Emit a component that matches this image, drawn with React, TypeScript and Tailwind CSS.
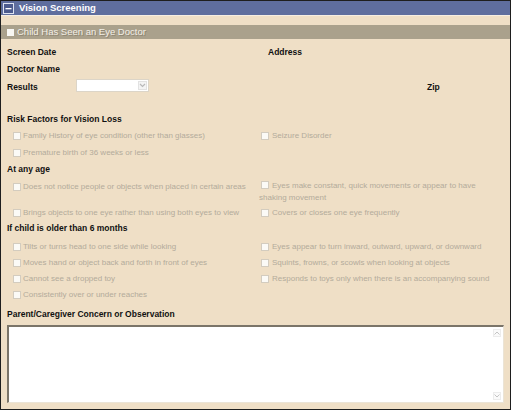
import React from "react";

const Cb = ({ label, right }: { label: string; right?: boolean }) => (
  <div className="flex items-center h-full pt-[2px]">
    <span className={`w-[8px] h-[8px] bg-[#fbfaf6] border border-[#d3ccbf] shrink-0 ml-[2px] ${right ? "mr-[3px]" : "mr-[2px]"}`} />
    <span className="text-[8px] text-[#b3ab9b] whitespace-nowrap">{label}</span>
  </div>
);

const Row = ({ h, mt, left, right }: { h: string; mt: string; left?: string; right?: string }) => (
  <div className={`grid grid-cols-[248px_1fr] pl-[10px] shrink-0 ${h} ${mt}`}>
    <div>{left ? <Cb label={left} /> : null}</div>
    <div>{right ? <Cb label={right} right /> : null}</div>
  </div>
);

const Label = ({ children }: { children: React.ReactNode }) => (
  <span className="block text-[8.5px] leading-[12px] font-bold text-[#111]">{children}</span>
);

export default function App() {
  return (
    <div className="w-[511px] h-[410px] border border-[#1e1e1e] bg-[#efdfc6] font-['Liberation_Sans',Arial,sans-serif] text-[8px] leading-[12px] flex flex-col overflow-hidden">
      {/* Header */}
      <div className="h-[15px] bg-[#5f6e9e] border-b border-[#f6eee2] flex items-center pl-[2px] shrink-0">
        <svg width="11" height="11" viewBox="0 0 11 11" className="shrink-0">
          <rect x="0.5" y="0.5" width="10" height="10" fill="#4c5b8d" stroke="#dfe4f1" />
          <rect x="2.5" y="5" width="6" height="1.3" fill="#ffffff" />
        </svg>
        <span className="ml-[5px] text-[9.5px] font-bold text-white leading-none">Vision Screening</span>
      </div>

      {/* Gray bar */}
      <div className="mt-[9px] h-[14px] bg-[#aaa18c] flex items-center pl-[6px] shrink-0">
        <span className="w-[7px] h-[7px] bg-[#f8f7f3] shrink-0" />
        <span className="ml-[3px] text-[9.5px] text-[#f3efe7] [text-shadow:1px_1px_0_#8d8471] leading-none">
          Child Has Seen an Eye Doctor
        </span>
      </div>

      {/* Info rows */}
      <div className="mt-[5px] h-[16px] grid grid-cols-[261px_1fr] items-center pl-[6px] shrink-0">
        <Label>Screen Date</Label>
        <Label>Address</Label>
      </div>
      <div className="mt-[1px] h-[16px] flex items-center pl-[6px] shrink-0">
        <Label>Doctor Name</Label>
      </div>
      <div className="mt-[1px] h-[16px] flex items-center pl-[6px] shrink-0">
        <div className="w-[69px] pt-[1px]">
          <Label>Results</Label>
        </div>
        <div className="w-[73px] h-[13px] bg-white border border-[#dcd5c8] flex items-center justify-end pr-[1px] -mt-[2px]">
          <span className="w-[9px] h-[9px] bg-[#f4f4f4] border border-[#e2e2e2] flex items-center justify-center">
            <svg width="7" height="5" viewBox="0 0 7 5">
              <path d="M1 1 L3.5 3.5 L6 1" fill="none" stroke="#b9b9b9" strokeWidth="1.2" />
            </svg>
          </span>
        </div>
        <div className="ml-[278px] pt-[2px]">
          <Label>Zip</Label>
        </div>
      </div>

      {/* Risk factors */}
      <div className="mt-[17px] h-[16px] flex items-center pl-[6px] shrink-0">
        <Label>Risk Factors for Vision Loss</Label>
      </div>
      <Row h="h-[16px]" mt="mt-0" left="Family History of eye condition (other than glasses)" right="Seizure Disorder" />
      <Row h="h-[16px]" mt="mt-[1px]" left="Premature birth of 36 weeks or less" />

      <div className="mt-[1px] h-[16px] flex items-center pl-[6px] shrink-0">
        <Label>At any age</Label>
      </div>
      <div className="mt-[1px] grid grid-cols-[248px_1fr] pl-[10px] h-[26px] shrink-0">
        <div className="h-[16px]">
          <Cb label="Does not notice people or objects when placed in certain areas" />
        </div>
        <div className="text-[8px] text-[#b3ab9b] leading-[12px] pt-[2px]">
          <span className="inline-block align-middle w-[8px] h-[8px] bg-[#fbfaf6] border border-[#d3ccbf] ml-[2px] mr-[3px] -mt-[1px]" />
          Eyes make constant, quick movements or appear to have
          <br />
          shaking movement
        </div>
      </div>
      <Row h="h-[16px]" mt="mt-0" left="Brings objects to one eye rather than using both eyes to view" right="Covers or closes one eye frequently" />

      <div className="h-[16px] flex items-center pl-[6px] shrink-0">
        <Label>If child is older than 6 months</Label>
      </div>
      <Row h="h-[16px]" mt="mt-[2px]" left="Tilts or turns head to one side while looking" right="Eyes appear to turn inward, outward, upward, or downward" />
      <Row h="h-[16px]" mt="mt-0" left="Moves hand or object back and forth in front of eyes" right="Squints, frowns, or scowls when looking at objects" />
      <Row h="h-[16px]" mt="mt-0" left="Cannot see a dropped toy" right="Responds to toys only when there is an accompanying sound" />
      <Row h="h-[16px]" mt="mt-0" left="Consistently over or under reaches" />

      <div className="mt-[4px] h-[16px] flex items-center pl-[6px] shrink-0">
        <Label>Parent/Caregiver Concern or Observation</Label>
      </div>
      <div className="mt-[3px] ml-[6px] w-[497px] h-[78px] shrink-0 bg-white border-t-2 border-l-2 border-[#7b7569] border-r border-b border-r-[#ebe4d6] border-b-[#ebe4d6] flex flex-col items-end justify-between py-[2px] pr-[2px]">
        <span className="w-[8px] h-[8px] flex items-center justify-center border border-[#ececec] bg-[#fafafa]">
          <svg width="6" height="4" viewBox="0 0 6 4">
            <path d="M0.5 3.5 L3 1 L5.5 3.5" fill="none" stroke="#c4c4c4" strokeWidth="1" />
          </svg>
        </span>
        <span className="w-[8px] h-[8px] flex items-center justify-center border border-[#ececec] bg-[#fafafa]">
          <svg width="6" height="4" viewBox="0 0 6 4">
            <path d="M0.5 0.5 L3 3 L5.5 0.5" fill="none" stroke="#c4c4c4" strokeWidth="1" />
          </svg>
        </span>
      </div>
    </div>
  );
}
